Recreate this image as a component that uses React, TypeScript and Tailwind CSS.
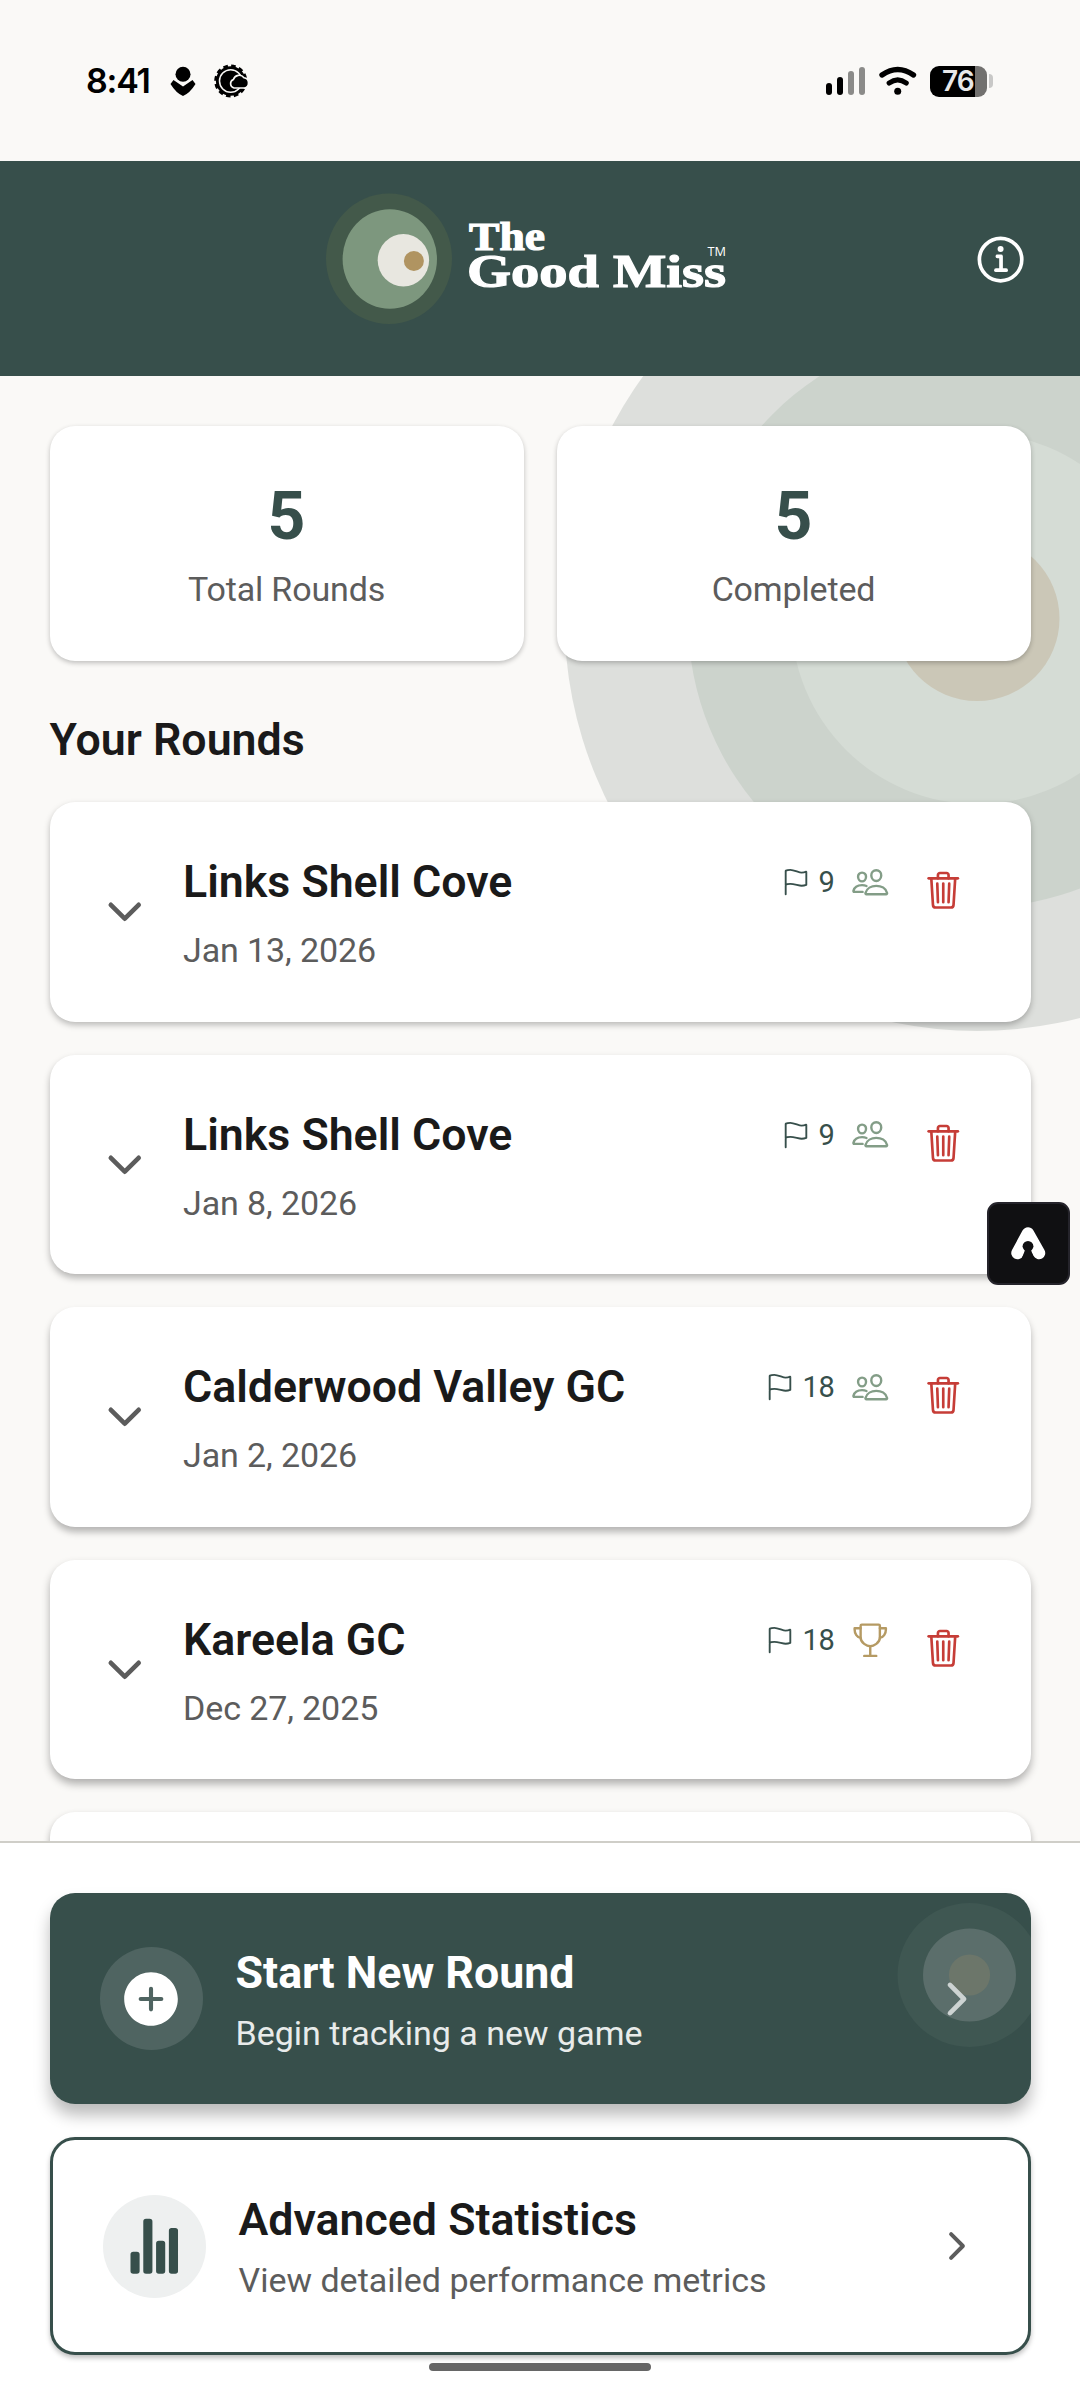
/**
 * Home screen of the round tracker: stats, list of rounds and the main actions.
 */

import React from "react";
import {
  IoAddCircle,
  IoChevronDown,
  IoChevronForward,
  IoFlagOutline,
  IoInformationCircleOutline,
  IoPeopleOutline,
  IoStatsChart,
  IoTrashOutline,
  IoTrophyOutline,
} from "react-icons/io5";

interface Round {
  course: string;
  date: string;
  holes: number;
  kind: "social" | "competition";
  shadow: string;
}

const ROUNDS: Round[] = [
  { course: "Links Shell Cove", date: "Jan 13, 2026", holes: 9, kind: "social", shadow: "shadow-[0_3px_6px_rgba(0,0,0,0.26)]" },
  { course: "Links Shell Cove", date: "Jan 8, 2026", holes: 9, kind: "social", shadow: "shadow-[0_4px_7px_rgba(0,0,0,0.28)]" },
  { course: "Calderwood Valley GC", date: "Jan 2, 2026", holes: 18, kind: "social", shadow: "shadow-[0_5px_7px_rgba(0,0,0,0.28)]" },
  { course: "Kareela GC", date: "Dec 27, 2025", holes: 18, kind: "competition", shadow: "shadow-[0_5px_8px_rgba(0,0,0,0.3)]" },
];

function StatusBar() {
  return (
    <div className="flex h-[161px] shrink-0 items-start justify-between pl-[86px] pr-[87px] pt-[59px] text-black">
      <div className="flex h-11 items-center">
        <span className="w-[79px] font-['Inter'] text-[34px] font-semibold leading-none tracking-[-1.200px]">8:41</span>
        <svg className="h-[34px] w-[36px]" viewBox="0 0 36 34">
          <circle cx="18" cy="10.3" r="7.5" />
          <path d="M8.500 16 L18 22.500 L27.500 16 L30.500 20 Q25 29 18 32 Q11 29 5.500 20 Z" />
        </svg>
        <svg className="ml-[12px] h-[36px] w-[38px]" viewBox="0 0 38 36">
          <circle cx="17.700" cy="18" r="14.800" />
          <circle cx="17.700" cy="18" r="15.200" fill="none" stroke="black" strokeWidth="2.600" strokeDasharray="4.600 3.360" />
          <circle cx="17.700" cy="18" r="11.200" fill="none" stroke="#faf9f7" strokeWidth="1.500" />
          <path
            d="M21 25 a4.400 4.400 0 0 1 -0.600 -8.400 a6 6 0 0 1 10.600 -1.800 a5.200 5.200 0 0 1 0.500 10.200 Z"
            stroke="#faf9f7"
            strokeWidth="1.600"
          />
        </svg>
      </div>
      <div className="flex h-11 items-center">
        <svg className="h-[30px] w-[40px]" viewBox="0 0 40 30">
          <rect x="0" y="17" width="6" height="12" rx="3" />
          <rect x="11" y="11" width="6" height="18" rx="3" />
          <rect x="22" y="5" width="6" height="24" rx="3" fill="#8b8b89" />
          <rect x="33" y="1" width="6" height="28" rx="3" fill="#8b8b89" />
        </svg>
        <svg className="ml-[12px] h-[30px] w-[40px]" viewBox="0 0 40 30" fill="none" stroke="black" strokeLinecap="round">
          <path d="M4 9 Q19.700 -2 35.500 9" strokeWidth="5.400" />
          <path d="M11.200 17 Q19.700 10.800 28.200 17" strokeWidth="5.200" />
          <circle cx="19.700" cy="25.300" r="3.500" fill="black" stroke="none" />
        </svg>
        <div className="ml-[12px] flex h-[31px] w-[57px] items-center overflow-hidden rounded-[9px] bg-[linear-gradient(90deg,#000_45px,#72716f_45px)]">
          <span className="pl-[12px] font-['Inter'] text-[28px] font-semibold leading-none tracking-[-1px] text-[#e8e8e8]">76</span>
        </div>
        <div className="ml-[2px] h-[14px] w-[4px] rounded-r-[4px] bg-[#c8c8c7]" />
      </div>
    </div>
  );
}

function Logo() {
  return (
    <svg className="h-[132px] w-[408px]" viewBox="326 193 408 132">
      <ellipse cx="389" cy="258.800" rx="63" ry="65.200" fill="#43594a" />
      <ellipse cx="389.800" cy="259" rx="47.200" ry="49.700" fill="#7d977e" />
      <ellipse cx="403.400" cy="260.200" rx="25.700" ry="26.200" fill="#e8e7e0" />
      <circle cx="413.900" cy="261" r="10" fill="#b09461" />
      <g fill="white" stroke="white" strokeWidth="1.200" fontFamily="Liberation Serif, serif" fontWeight="700">
        <text x="469" y="249.500" fontSize="39" textLength="76" lengthAdjust="spacingAndGlyphs">The</text>
        <text x="467" y="287" fontSize="47" textLength="259" lengthAdjust="spacingAndGlyphs">Good Miss</text>
      </g>
      <text x="707.500" y="256" fontSize="13.500" fill="white" fontFamily="Open Sans, sans-serif" textLength="18.500" lengthAdjust="spacingAndGlyphs">TM</text>
    </svg>
  );
}

function Header() {
  return (
    <header className="flex h-[215px] shrink-0 items-start justify-between bg-[#374f4b] pl-[326px] pr-[49px] pt-[32px]">
      <Logo />
      <button className="mt-[37.500px]">
        <IoInformationCircleOutline className="h-[59px] w-[59px] text-white" />
      </button>
    </header>
  );
}

function StatCard({ value, label }: { value: number; label: string }) {
  return (
    <div className="flex h-[235px] flex-1 flex-col items-center rounded-[25px] bg-white pt-[52px] shadow-[0_2px_5px_rgba(0,0,0,0.24)]">
      <span className="text-[66px] font-bold leading-[78px] text-[#374f4b]">{value}</span>
      <span className="mt-[13px] text-[34px] leading-[40px] tracking-[-0.150px] text-[#5c5c5c]">{label}</span>
    </div>
  );
}

function RoundCard({ round }: { round: Round }) {
  return (
    <div className={`flex h-[219.600px] shrink-0 rounded-[25px] bg-white pl-[50.500px] ${round.shadow}`}>
      <IoChevronDown className="mt-[85px] h-[49.500px] w-[49.500px] text-[#5c5c5c]" />
      <div className="ml-[33.500px] flex-1 pt-[54px]">
        <h3 className="text-[44.700px] font-semibold leading-[52px] text-[#1a1a1a]">{round.course}</h3>
        <p className="mt-[22px] text-[34px] leading-[40px] tracking-[-0.100px] text-[#5c5c5c]">{round.date}</p>
      </div>
      <div className="mt-[60px] flex h-[40px] items-center pr-[66.500px]">
        <IoFlagOutline className="h-[30px] w-[30px] text-[#374f4b]" />
        <span className="ml-[7.500px] text-[29px] leading-[36px] tracking-[-0.300px] text-[#374f4b]">{round.holes}</span>
        {round.kind === "social" ? (
          <IoPeopleOutline className="ml-[16.500px] h-[38.500px] w-[38.500px] text-[#839d87]" />
        ) : (
          <IoTrophyOutline className="ml-[16.500px] h-[38.500px] w-[38.500px] text-[#b59a63]" />
        )}
        <IoTrashOutline className="ml-[32px] mt-[17px] h-[42.500px] w-[42.500px] text-[#c63d37]" />
      </div>
    </div>
  );
}

function StartRoundButton() {
  return (
    <button className="relative flex h-[211px] w-full shrink-0 items-center rounded-[25px] bg-[#374f4b] pl-[50px] pr-[49px] text-left shadow-[0_11px_16px_rgba(0,0,0,0.27)]">
      <svg className="absolute right-0 top-0 h-[211px] w-[200px] rounded-r-[25px]" viewBox="0 0 200 211">
        <circle cx="138.500" cy="82" r="72" fill="#3f5752" />
        <circle cx="138.500" cy="82" r="46.500" fill="#5b6e6b" />
        <circle cx="138.500" cy="82" r="20.600" fill="#6c766a" />
      </svg>
      <span className="flex h-[103px] w-[103px] items-center justify-center rounded-full bg-[#4f6461]">
        <IoAddCircle className="h-[66px] w-[66px] text-white" />
      </span>
      <span className="ml-[33px] flex flex-1 flex-col pt-[4px]">
        <span className="text-[44.700px] font-bold leading-[52px] text-white">Start New Round</span>
        <span className="mt-[13px] text-[34px] leading-[42px] text-[#e8ebea]">Begin tracking a new game</span>
      </span>
      <IoChevronForward className="relative h-[50px] w-[50px] text-[#cdd3d2]" />
    </button>
  );
}

function StatisticsButton() {
  return (
    <button className="mt-[33px] flex h-[218px] w-full shrink-0 items-center rounded-[25px] border-[3px] border-[#374f4b] bg-white pl-[50px] pr-[50px] text-left shadow-[0_3px_5px_rgba(0,0,0,0.25)]">
      <span className="flex h-[103px] w-[103px] items-center justify-center rounded-full bg-[#eef0f0]">
        <IoStatsChart className="h-[58.500px] w-[58.500px] text-[#374f4b]" />
      </span>
      <span className="ml-[33px] flex flex-1 flex-col pt-[3px]">
        <span className="text-[44.700px] font-semibold leading-[52px] text-[#1a1a1a]">Advanced Statistics</span>
        <span className="mt-[13px] text-[34px] leading-[42px] text-[#5c5c5c]">View detailed performance metrics</span>
      </span>
      <IoChevronForward className="h-[42px] w-[42px] text-[#5c5c5c]" />
    </button>
  );
}

export default function App() {
  return (
    <div className="relative flex h-[2404px] w-[1080px] flex-col overflow-hidden bg-[#faf9f7] font-['Roboto',sans-serif]">
      <StatusBar />
      <Header />

      <main className="relative h-[1465px] shrink-0 overflow-hidden px-[49.500px] pt-[50px]">
        {/* Target rings behind the content */}
        <svg className="absolute right-0 top-0 h-[700px] w-[540px]" viewBox="540 376 540 700">
          <circle cx="977" cy="618.500" r="412.500" fill="#dddfdc" />
          <circle cx="977" cy="618.500" r="289" fill="#ccd3cc" />
          <circle cx="977" cy="618.500" r="185.600" fill="#d5dcd5" />
          <circle cx="977" cy="618.500" r="82.500" fill="#cbc7b7" />
        </svg>

        <div className="relative">
          <div className="flex gap-[33px]">
            <StatCard value={5} label="Total Rounds" />
            <StatCard value={5} label="Completed" />
          </div>

          <h2 className="mt-[53px] text-[44.700px] font-semibold leading-[52px] text-[#1a1a1a]">Your Rounds</h2>

          <div className="mt-[36px] flex flex-col gap-[33px]">
            {ROUNDS.map((round) => (
              <RoundCard key={round.date} round={round} />
            ))}
            <div className="h-[219px] shrink-0 rounded-[25px] bg-white shadow-[0_4px_7px_rgba(0,0,0,0.3)]" />
          </div>
        </div>
      </main>

      <footer className="flex flex-1 flex-col items-center border-t-2 border-[#cfcec8] bg-white px-[49.500px] pt-[50px]">
        <StartRoundButton />
        <StatisticsButton />
        <div className="mt-[8px] h-[8px] w-[222px] shrink-0 rounded-full bg-[#666666]" />
      </footer>

      {/* Floating assistant badge */}
      <div className="absolute left-[987px] top-[1202px] h-[83px] w-[83px] overflow-hidden rounded-[11px] border-2 border-[#25242b] bg-[#101012]">
        <svg className="h-[79px] w-[79px]" viewBox="2 2 79 79">
          <path d="M30.500 51 L41 31.500 L52 51" fill="white" stroke="white" strokeWidth="12.500" strokeLinecap="round" strokeLinejoin="round" />
          <circle cx="41" cy="44.300" r="5.400" fill="#101012" />
          <path d="M38 48 L44 48 L45.500 52 L48 58 L34 58 L36.500 52 Z" fill="#101012" />
        </svg>
      </div>
    </div>
  );
}
